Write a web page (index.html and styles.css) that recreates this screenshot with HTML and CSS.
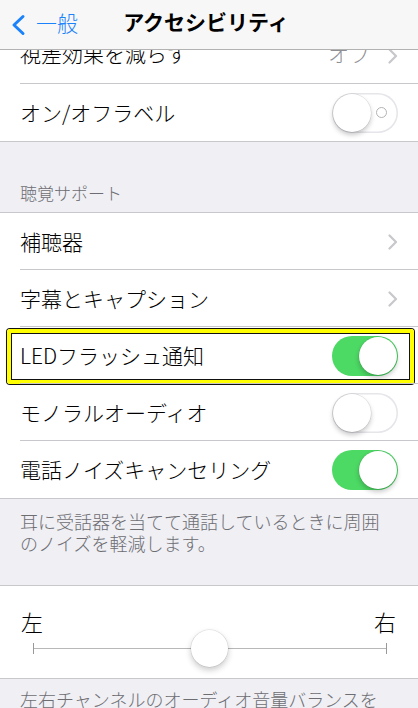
FILE: index.html
```html
<!DOCTYPE html>
<html lang="ja">
<head>
<meta charset="utf-8">
<title>アクセシビリティ</title>
<link rel="stylesheet" href="styles.css">
</head>
<body>
<div class="screen">
  <div class="content">
    <section class="group">
      <div class="row first">
        <span class="label">視差効果を減らす</span>
        <span class="value">オフ</span>
        <svg class="chev" viewBox="0 0 10 16" width="10" height="16"><path d="M1.5 1.5 L8 8 L1.5 14.5" fill="none" stroke="#c7c7cc" stroke-width="2.2" stroke-linecap="round" stroke-linejoin="round"/></svg>
      </div>
      <div class="row">
        <span class="label">オン/オフラベル</span>
        <span class="switch off labeled"><span class="ring"></span><span class="knob"></span></span>
      </div>
    </section>

    <div class="section-header">聴覚サポート</div>

    <section class="group">
      <div class="row">
        <span class="label">補聴器</span>
        <svg class="chev" viewBox="0 0 10 16" width="10" height="16"><path d="M1.5 1.5 L8 8 L1.5 14.5" fill="none" stroke="#c7c7cc" stroke-width="2.2" stroke-linecap="round" stroke-linejoin="round"/></svg>
      </div>
      <div class="row">
        <span class="label">字幕とキャプション</span>
        <svg class="chev" viewBox="0 0 10 16" width="10" height="16"><path d="M1.5 1.5 L8 8 L1.5 14.5" fill="none" stroke="#c7c7cc" stroke-width="2.2" stroke-linecap="round" stroke-linejoin="round"/></svg>
      </div>
      <div class="row highlighted">
        <span class="label">LEDフラッシュ通知</span>
        <span class="switch on"><span class="knob"></span></span>
        <span class="highlight"></span>
      </div>
      <div class="row">
        <span class="label">モノラルオーディオ</span>
        <span class="switch off"><span class="knob"></span></span>
      </div>
      <div class="row">
        <span class="label">電話ノイズキャンセリング</span>
        <span class="switch on"><span class="knob"></span></span>
      </div>
    </section>

    <div class="section-footer">耳に受話器を当てて通話しているときに周囲<br>のノイズを軽減します。</div>

    <section class="group slider-group">
      <div class="slider-labels"><span>左</span><span>右</span></div>
      <div class="slider">
        <span class="track"></span>
        <span class="thumb"></span>
      </div>
    </section>

    <div class="section-footer second">左右チャンネルのオーディオ音量バランスを</div>
  </div>

  <header class="navbar">
    <div class="back">
      <svg class="back-chev" viewBox="0 0 16 22" width="16" height="22"><path d="M13 2.5 L4 11 L13 19.5" fill="none" stroke="#1a82fb" stroke-width="3" stroke-linecap="round" stroke-linejoin="round"/></svg>
      <span>一般</span>
    </div>
    <div class="title">アクセシビリティ</div>
  </header>
</div>
</body>
</html>
```

FILE: styles.css
```css
* { box-sizing: border-box; }
html, body {
  margin: 0;
  padding: 0;
}
body {
  width: 418px;
  height: 708px;
  overflow: hidden;
  background: #efeff4;
  font-family: "Noto Sans CJK JP", "Noto Sans", sans-serif;
  font-weight: 300;
  color: #000;
}
.screen {
  position: relative;
  width: 418px;
  height: 708px;
  overflow: hidden;
}
.content {
  padding-top: 26px;
}
.group {
  background: #fff;
  border-top: 1px solid #c8c7cc;
  border-bottom: 1px solid #c8c7cc;
}
.row {
  position: relative;
  height: 57px;
  display: flex;
  align-items: center;
  padding: 0 20px;
  font-size: 21px;
}
.row.first .label,
.row.first .value {
  position: relative;
  top: -2px;
}
.row + .row::before {
  content: "";
  position: absolute;
  left: 20px;
  right: 0;
  top: -1px;
  height: 1px;
  background: #c8c7cc;
}
.label {
  flex: 1;
  white-space: nowrap;
  line-height: 1;
}
.value {
  color: #8e8e93;
  margin-right: 18px;
  line-height: 1;
}
.chev {
  display: block;
  flex: none;
}
.switch {
  position: relative;
  flex: none;
  width: 66px;
  height: 40px;
  border-radius: 20px;
}
.switch.on {
  background: #4cd964;
}
.switch.off {
  background: #fff;
  box-shadow: inset 0 0 0 1.5px #e5e5ea;
}
.knob {
  position: absolute;
  top: 1px;
  width: 38px;
  height: 38px;
  border-radius: 50%;
  background: #fff;
  box-shadow: 0 3px 5px rgba(0,0,0,0.22), 0 0 0 0.5px rgba(0,0,0,0.12);
}
.switch.on .knob { right: 1px; }
.switch.off .knob { left: 1px; }
.ring {
  position: absolute;
  right: 11px;
  top: 14px;
  width: 11px;
  height: 11px;
  border-radius: 50%;
  border: 1.5px solid #b3b3b3;
}
.highlight {
  position: absolute;
  left: 7px;
  right: 4px;
  top: 2px;
  bottom: 0;
  border: 4px solid #ffff00;
  border-radius: 3px;
  box-shadow: 0 0 0 1px #111, inset 0 0 0 1px #111;
  pointer-events: none;
}
.section-header {
  height: 70px;
  padding: 40px 20px 0;
  font-size: 17px;
  line-height: 22px;
  color: #6d6d72;
}
.section-footer {
  height: 86px;
  padding: 12px 20px 0;
  font-size: 18px;
  line-height: 21.5px;
  color: #6d6d72;
}
.section-footer.second {
  height: auto;
  padding-top: 10px;
  white-space: nowrap;
}
.slider-group {
  padding: 22px 0 14px;
}
.slider-labels {
  display: flex;
  justify-content: space-between;
  padding: 0 22px 0 21px;
  font-size: 22px;
  line-height: 26px;
}
.slider {
  position: relative;
  height: 30px;
  margin: 0 31px 0 33px;
}
.track {
  position: absolute;
  left: 0;
  right: 0;
  top: 14px;
  height: 1px;
  background: #b8b8b8;
}
.track::before, .track::after {
  content: "";
  position: absolute;
  top: -5px;
  width: 1px;
  height: 11px;
  background: #999;
}
.track::before { left: 0; }
.track::after { right: 0; }
.thumb {
  position: absolute;
  left: 50%;
  top: -4px;
  width: 37px;
  height: 37px;
  margin-left: -19px;
  border-radius: 50%;
  background: #fff;
  box-shadow: 0 3px 6px rgba(0,0,0,0.22), 0 0 0 0.5px rgba(0,0,0,0.12);
}
.navbar {
  position: absolute;
  top: 0;
  left: 0;
  right: 0;
  height: 50px;
  background: #f7f7f7;
  border-bottom: 1px solid #b2b2b2;
}
.back {
  position: absolute;
  left: 10px;
  top: 0;
  height: 44px;
  display: flex;
  align-items: center;
  gap: 10px;
  color: #1a82fb;
  font-size: 21px;
}
.back-chev {
  display: block;
  margin-top: 6px;
}
.back span {
  line-height: 1;
}
.title {
  position: absolute;
  left: 0;
  right: 0;
  top: 0;
  height: 42px;
  display: flex;
  align-items: center;
  justify-content: center;
  font-size: 21px;
  font-weight: 700;
  padding-right: 6px;
}
```
